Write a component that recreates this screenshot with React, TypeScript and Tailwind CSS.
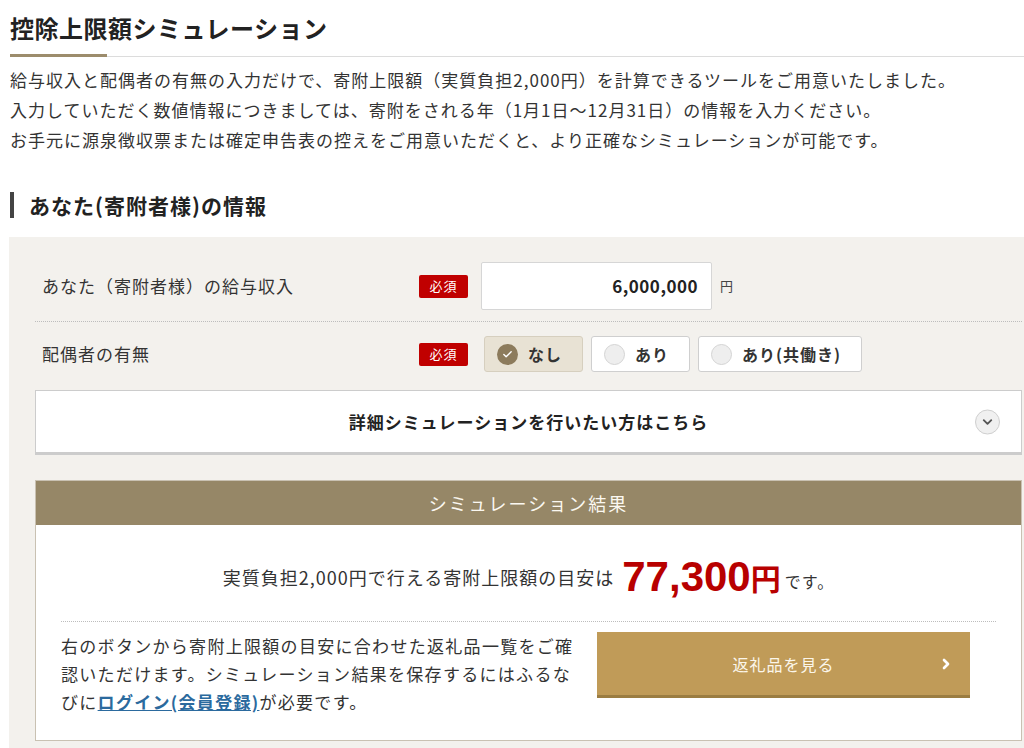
import { ChevronDown, ChevronRight, Check } from 'lucide-react';

const font = { fontFamily: '"Noto Sans CJK JP", "Noto Sans", sans-serif' };

function Badge() {
  return (
    <span className="inline-flex h-[23px] w-[49px] items-center justify-center rounded-[2px] bg-[#c00000] text-[13px] tracking-[1px] text-white">
      必須
    </span>
  );
}

function Radio({ label, checked, width }: { label: string; checked?: boolean; width: string }) {
  return (
    <div
      className={`flex h-[36px] items-center gap-[10px] rounded-[3px] border pl-[12px] text-[16px] font-bold tracking-[1px] text-[#333] ${width} ${
        checked ? 'border-[#d6cfbf] bg-[#e8e2d4]' : 'border-[#cfcfcf] bg-white'
      }`}
    >
      {checked ? (
        <span className="flex h-[21px] w-[21px] items-center justify-center rounded-full bg-[#8c7b5c]">
          <Check className="h-[11px] w-[11px] text-white" strokeWidth={3} />
        </span>
      ) : (
        <span className="h-[21px] w-[21px] rounded-full border border-[#d4d4d4] bg-[#eeeeee]" />
      )}
      <span>{label}</span>
    </div>
  );
}

export default function App() {
  return (
    <div className="min-h-screen w-[1024px] overflow-hidden bg-white text-[#333]" style={font}>
      <div className="pl-[10px] pt-[12px]">
        <h1 className="text-[24px] font-bold leading-[32px] tracking-[0.5px] text-[#222]">控除上限額シミュレーション</h1>
        <div className="mt-[10px] flex h-[3px] items-end">
          <div className="h-[3px] w-[97px] bg-[#9c8c6c]" />
          <div className="h-[1px] flex-1 bg-[#dcdcdc]" />
        </div>

        <div className="mt-[8px] text-[17px] leading-[30px] tracking-[1px] text-[#333]">
          <p>給与収入と配偶者の有無の入力だけで、寄附上限額（実質負担2,000円）を計算できるツールをご用意いたしました。</p>
          <p>入力していただく数値情報につきましては、寄附をされる年（1月1日～12月31日）の情報を入力ください。</p>
          <p>お手元に源泉徴収票または確定申告表の控えをご用意いただくと、より正確なシミュレーションが可能です。</p>
        </div>

        <div className="mt-[37px] flex items-center gap-[15px]">
          <div className="h-[26px] w-[4px] bg-[#444]" />
          <h2 className="text-[21px] font-bold leading-[26px] tracking-[1px] text-[#222]">あなた(寄附者様)の情報</h2>
        </div>
      </div>

      <div className="ml-[9px] mt-[19px] bg-[#f3f1ed] pb-[8px] pl-[26px] pr-[2px] pt-[25px]">
        <div className="flex h-[48px] items-center pl-[7px]">
          <div className="w-[377px] text-[17px] tracking-[1px] text-[#333]">あなた（寄附者様）の給与収入</div>
          <Badge />
          <div className="ml-[13px] flex h-[48px] w-[231px] items-center justify-end rounded-[2px] border border-[#d6d6d6] bg-white pr-[13px] text-[17px] font-bold tracking-[0.5px] text-[#222]">
            6,000,000
          </div>
          <span className="ml-[8px] text-[13px] text-[#444]">円</span>
        </div>

        <div className="mt-[11px] border-t border-dotted border-[#bdbdbd]" />

        <div className="mt-[14px] flex h-[36px] items-center pl-[7px]">
          <div className="w-[377px] text-[17px] tracking-[1px] text-[#333]">配偶者の有無</div>
          <Badge />
          <div className="ml-[16px] flex gap-[8px]">
            <Radio label="なし" checked width="w-[99px]" />
            <Radio label="あり" width="w-[99px]" />
            <Radio label="あり(共働き)" width="w-[164px]" />
          </div>
        </div>

        <div className="relative mt-[18px] flex h-[65px] items-center justify-center border border-b-[3px] border-[#cccccc] bg-white">
          <span className="text-[17px] font-bold tracking-[1px] text-[#222]">詳細シミュレーションを行いたい方はこちら</span>
          <span className="absolute right-[21px] top-1/2 flex h-[25px] w-[25px] -translate-y-1/2 items-center justify-center rounded-full border border-[#cfcfcf] bg-[#f0f0f0]">
            <ChevronDown className="h-[15px] w-[15px] text-[#555]" strokeWidth={3} />
          </span>
        </div>

        <div className="mt-[25px] border border-[#c9c1b2] bg-white">
          <div className="flex h-[44px] items-center justify-center bg-[#968767] text-[18px] tracking-[2px] text-[#fbf8f1]">
            シミュレーション結果
          </div>
          <div className="px-[25px]">
            <div className="flex h-[96px] items-center justify-center pt-[8px] text-[#333]">
              <span className="text-[18px] tracking-[1px]">実質負担2,000円で行える寄附上限額の目安は</span>
              <span
                className="ml-[8px] text-[42px] font-bold leading-none text-[#b80000]"
                style={{ fontFamily: '"Liberation Sans", Arial, sans-serif' }}
              >
                77,300
              </span>
              <span className="text-[30px] font-bold leading-none text-[#b80000]">円</span>
              <span className="ml-[4px] mt-[8px] text-[16px] tracking-[1px]">です。</span>
            </div>
            <div className="border-t border-dotted border-[#bdbdbd]" />
            <div className="flex pb-[24px] pt-[10px]">
              <p className="w-[522px] text-[17px] leading-[28px] tracking-[1.3px] text-[#333]">
                右のボタンから寄附上限額の目安に合わせた返礼品一覧をご確認いただけます。シミュレーション結果を保存するにはふるなびに
                <a className="font-bold text-[#2b6a9e] underline" href="#">
                  ログイン(会員登録)
                </a>
                が必要です。
              </p>
              <div className="relative ml-auto mr-[26px] flex h-[66px] w-[373px] items-center justify-center border-b-[3px] border-[#9b7d42] bg-[#c09b58] text-[16px] tracking-[1px] text-[#fbf6ea]">
                返礼品を見る
                <ChevronRight className="absolute right-[16px] top-1/2 h-[16px] w-[16px] -translate-y-1/2 text-white" strokeWidth={4} />
              </div>
            </div>
          </div>
        </div>
      </div>
    </div>
  );
}
